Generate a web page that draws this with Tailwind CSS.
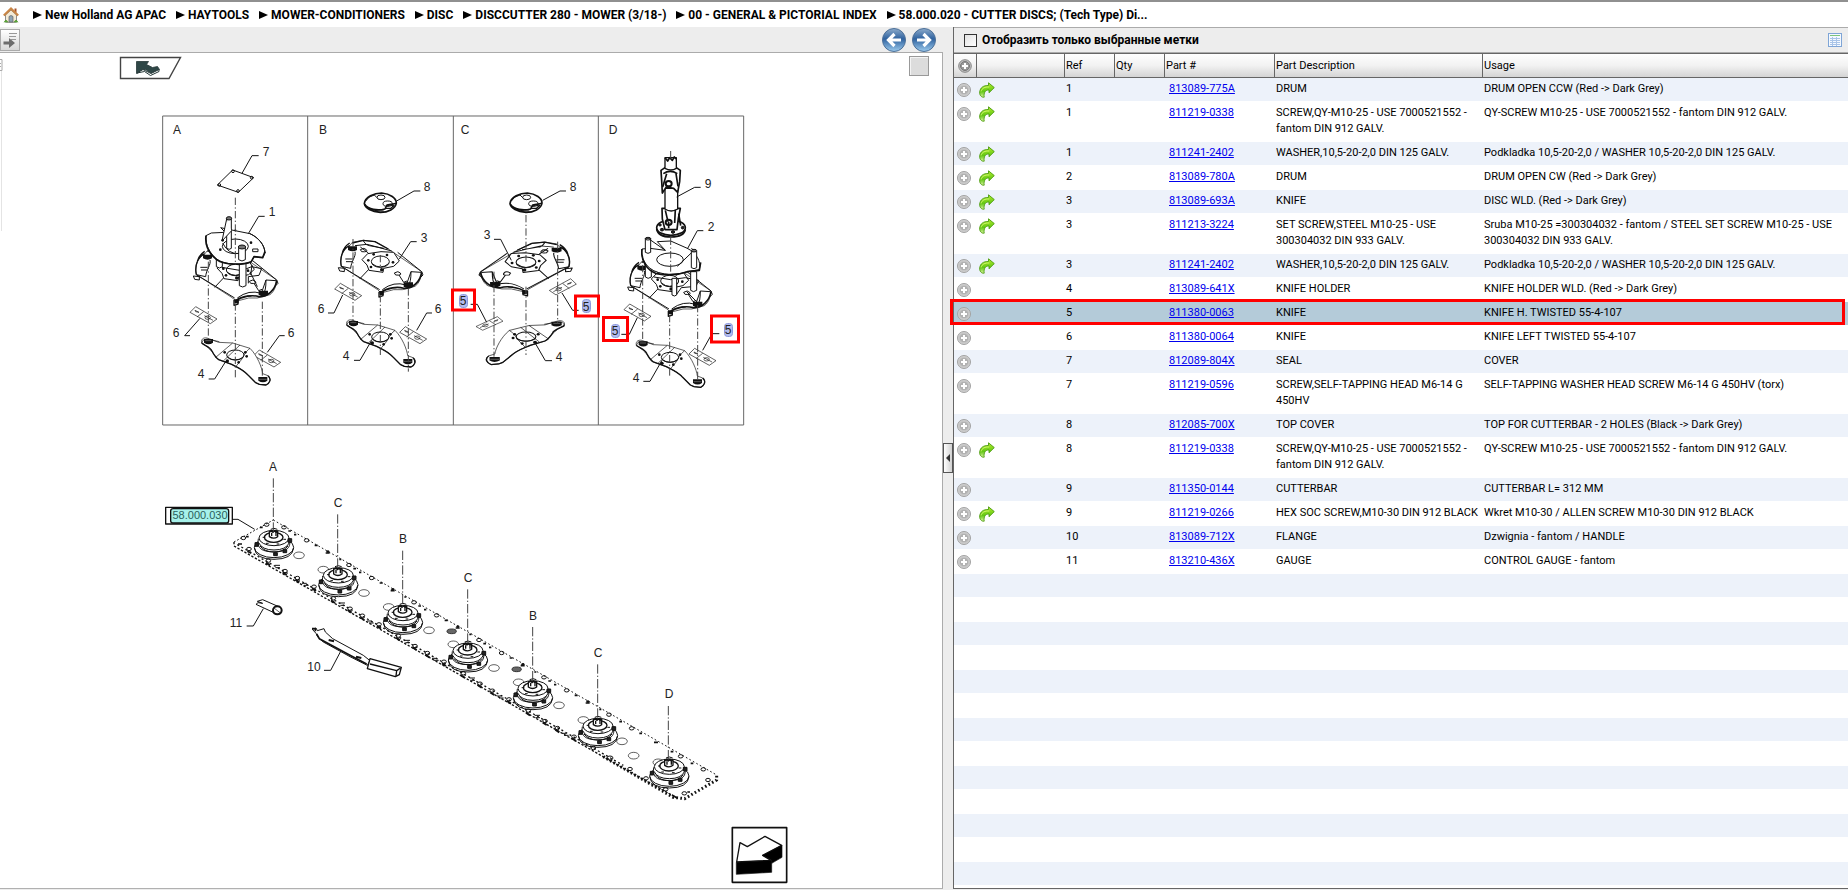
<!DOCTYPE html>
<html lang="ru">
<head>
  <meta charset="UTF-8" />
  <meta name="viewport" content="width=device-width, initial-scale=1.0"/>
  <title>58.000.020 - CUTTER DISCS</title>
  <script src="https://cdn.jsdelivr.net/npm/@tailwindcss/browser@4"></script>
</head>
<body class="flex h-screen flex-col border-t-2 border-[#909090] bg-[#ededed] pb-px font-[Roboto,Arial,sans-serif] text-[11px] leading-4 text-black">

  <!-- shared shapes -->
  <svg width="0" height="0" class="absolute" aria-hidden="true">
    <defs>
      <linearGradient id="blueBall" x1="0" y1="0" x2="0" y2="1">
        <stop offset="0" stop-color="#8dabcb"/><stop offset=".45" stop-color="#2f629f"/><stop offset="1" stop-color="#9ccbee"/>
      </linearGradient>
      <linearGradient id="greenArrow" x1="0" y1="0" x2="0" y2="1">
        <stop offset="0" stop-color="#b4ec2c"/><stop offset=".6" stop-color="#62c814"/><stop offset="1" stop-color="#d8f4a0"/>
      </linearGradient>
      <symbol id="plus" viewBox="0 0 14 14">
        <circle cx="7" cy="7" r="6.5" fill="#d0d0d0" stroke="#a2a2a2"/>
        <circle cx="7" cy="7" r="4.8" fill="#b2b2b2" stroke="#c8c8c8"/>
        <path d="M7 4v6M4 7h6" stroke="#fff" stroke-width="2"/>
      </symbol>
      <symbol id="plusDark" viewBox="0 0 14 14">
        <circle cx="7" cy="7" r="6.3" fill="#c4c4c4" stroke="#858585"/>
        <circle cx="7" cy="7" r="4.5" fill="#999" stroke="#777"/>
        <path d="M7 4v6M4 7h6" stroke="#fff" stroke-width="2"/>
      </symbol>
      <symbol id="forward" viewBox="0 0 16 16">
        <path d="M9.500 .8 15.300 5.600 10 10.800V8C6.500 7.800 4.500 10.500 5.200 15.200 2.800 15.600.3 13.500.7 10 1.200 5.500 4.500 3.300 9.500 3.500Z" fill="url(#greenArrow)" stroke="#4d9c10" stroke-width=".9"/>
        <path d="M2 9.500C3 6 6 4.800 10.300 5" fill="none" stroke="#d6f873" stroke-width=".9"/>
      </symbol>

      <!-- knife holder (4) -->
      <g id="holder">
        <path d="M-101-36C-104-50-92-54-82-50L-50-38-8-36 44-20C66 2 80 38 82 56L98 62C109 72 104 84 92 90L72 88 61 83 38 60C24 44 8 38-11 28L-50 14C-64 2-72-20-101-36Z" fill="#fff" stroke-width="2"/>
        <path d="M-101-36C-96-30-74-24-70-12-62 4-56 10-50 14L-11 28C8 38 24 44 38 60L61 83 72 88 92 90C104 84 109 72 98 62" stroke-width="4"/>
        <path d="M-60 8-8-36M-36 18 14-30M44-20C30-10 24 4 20 12L2 34M-101-36q2-12 16-12l37 8" stroke-width="2"/>
        <ellipse rx="26" ry="15"/>
        <path d="M-24 6q24 18 48 0"/>
        <g fill="#111" stroke="none">
          <circle cx="-32" cy="-8" r="4"/><circle cx="30" cy="-8" r="4"/><circle cx="-24" cy="18" r="5"/><circle cx="10" cy="22" r="4"/><circle cx="34" cy="4" r="4"/>
          <path d="M-94-48h27v11q-13 9-27 0ZM69 66h27v11q-13 9-27 0Z"/>
        </g>
        <path d="M-90-43h18M71 73h23" stroke="#aaa" stroke-width="1.500"/>
      </g>

      <!-- lower disc (3) -->
      <g id="disc">
        <path d="M-117 14C-124-18-108-42-92-48L-84-58-51-64-16-60 24-38 124 30C122 44 120 62 104 74L66 84 40 84 2 94-8 84-117 14Z" fill="#fff" stroke-width="2"/>
        <path d="M-117 14-2 84M52-28 124 30M-62 52-28 16"/>
        <path d="M-117 14C-124-18-108-42-92-48M-84-56-51-64-16-60 24-38M-92-56q-18 12-22 30" stroke-width="4"/>
        <path d="M-76-48-40-52-10-44 34-32M-60-44l24 18M-51-62q8 14 18 14l44 8" />
        <path d="M-117 14l28 6C-88 0-72-16-76-30M-105-8h22M-103 0h20M-126 18l18 2v10l-14-2z"/>
        <path d="M2 92C20 78 52 74 70 80 96 82 120 60 124 32" stroke-width="5"/>
        <path d="M6 84q34-26 72-14l14-40 30 2M92 30q0 34-8 40M124 30l4 10-8 8"/>
        <path d="M-55-6-38-24 2-30 40-28 57-2 40 14 10 20 8 32-34 26-40 10Z" fill="#fff"/>
        <ellipse rx="27" ry="17"/>
        <path d="M-25 6q25 20 50 0"/>
        <g fill="#111" stroke="none">
          <circle cx="-36" cy="-4" r="4"/><circle cx="-20" cy="-22" r="4"/><circle cx="20" cy="-20" r="4"/><circle cx="38" cy="2" r="4"/><circle cx="-28" cy="16" r="4"/><circle cx="4" cy="24" r="5"/>
          <path d="M-97-46h27v11q-13 8-27 0ZM70 62h28v13q-14 8-28 0ZM-4 88h14v12H-2z"/>
        </g>
        <path d="M-60-36q12-8 18 0t-14 6ZM42 34q12-8 18 0t-14 6ZM56 40l14 22 10-4M36 78h12"/>
        <path d="M-4 90v16l12-4v-12" stroke-width="4"/>
      </g>

      <!-- cover (8) -->
      <g id="cover">
        <path d="M-48 4C-46-16-18-28 4-28 30-26 48-12 48 2 46 20 22 30 0 30-26 28-46 18-48 4Z" fill="#fff" stroke-width="5"/>
        <path d="M-47 6C-36 22-8 26 14 20L20 8C34 4 44 6 47 2" stroke-width="5"/>
        <path d="M-44-4q8-14 26-18l8 8M-40 14q20 14 50 12"/>
        <ellipse cx="2" cy="-15" rx="12" ry="7"/>
        <ellipse cx="22" cy="4" rx="14" ry="8"/>
        <path d="M14 18h18l10-10M20 12q12-10 20 2" stroke-width="4"/>
      </g>

      <!-- flat knife -->
      <g id="knife" stroke-width="2">
        <path d="M-24-25 40 12 20 26-41-8Z" fill="#fff"/>
        <path d="M0-10-20 6M-26-14l12 6-10-2zM2 2l26 14"/>
        <ellipse cx="12" cy="8" rx="8" ry="5"/>
      </g>

      <!-- cutterbar hub -->
      <g id="hub">
        <ellipse cy="8" rx="59" ry="31" fill="#fff"/>
        <path d="M-59 10q4 34 59 34t59-34"/>
        <path d="M-47-18C-50 8-44 20 0 22 44 20 50 8 47-18" fill="#fff"/>
        <ellipse cy="-20" rx="45" ry="23" fill="#fff"/>
        <path d="M-46-6q10 22 46 22t46-22M-42 4q14 18 42 18t42-18"/>
        <ellipse cx="-1" cy="-22" rx="28" ry="15" stroke-width="4"/>
        <path d="M-14-40h25v16q-12 9-25 0Z" fill="#fff" stroke-width="4"/>
        <path d="M-12-38l5-5 4 6 5-5 4 6 4-4M-7-36v10M6-36v10" stroke-width="4"/>
        <g fill="#222">
          <path d="M-57-6h10v11h-10zM42-18h11v11H42zM-1 24h11v9H-1zM27 15h11v9H27z"/>
        </g>
        <path d="M-34-22h8M-24-4h8M8-2h8M28-16h8M-10-46q10-6 20 0"/>
      </g>

      <!-- bolts that repeat along the bar -->
      <g id="bolts">
        <ellipse cx="402" cy="262" rx="7" ry="5"/><ellipse cx="470" cy="301" rx="7" ry="5"/>
        <path d="M415 273h8M432 284h7M494 316h9M527 339h12M530 336q4-5 7 0M568 358h6" stroke-width="5"/>
        <ellipse cx="355" cy="362" rx="7" ry="5"/><ellipse cx="405" cy="393" rx="7" ry="5"/><ellipse cx="442" cy="414" rx="7" ry="5"/><ellipse cx="492" cy="440" rx="7" ry="5"/>
        <path d="M348 368l12 8M398 397l12 8M436 419l12 8M486 445l12 8" stroke-width="6"/>
        <path d="M374 376h16M376 383h14M456 430h14M462 436h14"/>
        <ellipse cx="447" cy="346" rx="16" ry="10" stroke-width="2"/>
      </g>
    </defs>
  </svg>

  <nav class="flex h-[25px] shrink-0 items-center bg-white pl-[3px] text-xs font-bold whitespace-nowrap" aria-label="Breadcrumb">
    <a href="#" class="mr-[14px]" aria-label="Home">
      <svg class="size-4" viewBox="0 0 16 16">
        <path d="M2.500 8v7.300h11V8L8 3Z" fill="#f3ead6" stroke="#8e8e8e"/>
        <path d="M6 15V9.500q2-2 4 0V15Z" fill="#8fa4b4" stroke="#666" stroke-width=".7"/>
        <path d="M11.500 1.500h2v4h-2z" fill="#a2522c"/>
        <path d="M.8 8.500 8 1.600l7.200 6.900" fill="none" stroke="#c98545" stroke-width="2.200"/>
        <path d="M1 15.300q2-4 4 0M11 15.300q2-4 4 0" fill="#5caa38" stroke="#4a8d2c" stroke-width=".6"/>
      </svg>
    </a>
    <ol id="crumbs" class="flex items-center gap-[10px]"></ol>
  </nav>

  <main class="grid min-h-0 flex-1 grid-cols-[943fr_10px_895fr]">

    <section class="flex min-w-0 flex-col border-b border-[#b0b0b0]">
      <div class="flex h-[26px] shrink-0 items-center justify-between border-b border-[#ababab] pr-[7px]">
        <button type="button" aria-label="Show tree" class="h-[22px] w-5 border border-[#aaa] bg-gradient-to-b from-white to-[#d8d8d8]">
          <svg class="h-5 w-[18px]" viewBox="0 0 18 20">
            <path d="M8 3.500h8M8 6.500h7M10 9.500h5" stroke="#999"/>
            <path d="M2.500 11.500H8V8l6 5-6 5v-3.500H2.500Z" fill="#6d6d6d"/>
          </svg>
        </button>
        <div class="flex gap-[6px]">
          <button type="button" aria-label="Previous">
            <svg class="size-6" viewBox="0 0 24 24">
              <circle cx="12" cy="12" r="11.500" fill="url(#blueBall)" stroke="#4d7098"/>
              <path d="M12.500 6 6.500 12l6 6M7.500 12H19" fill="none" stroke="#fff" stroke-width="3.200"/>
            </svg>
          </button>
          <button type="button" aria-label="Next">
            <svg class="size-6" viewBox="0 0 24 24">
              <circle cx="12" cy="12" r="11.500" fill="url(#blueBall)" stroke="#4d7098"/>
              <path d="M11.500 6l6 6-6 6M16.500 12H5" fill="none" stroke="#fff" stroke-width="3.200"/>
            </svg>
          </button>
        </div>
      </div>

      <div class="relative min-h-0 flex-1 border-r border-[#ababab] bg-white">
        <button type="button" aria-label="Fit drawing" class="absolute top-[3px] right-[13px] size-5 border border-[#999] bg-[#dcdcdc] shadow-[inset_1px_1px_0_#f4f4f4]"></button>
        <svg class="h-full w-full font-['Liberation_Sans',Arial,sans-serif]" viewBox="0 53 942 835" preserveAspectRatio="xMinYMin meet" fill="none" stroke="#111">
          <!-- edge handle and page mark -->
          <path d="M0 59.500h2V70.500H0M0 63.500h1M0 66.500h1" stroke="#aaa"/>
          <path d="M1.500 71v160" stroke="#e4e4e4"/>
          <path d="M120.500 57.500H180.500L169 78.500H120.500Z" stroke="#444" stroke-width="1.400"/>
          <path d="M136.500 61.500h12l-2 3 6 3 5-1 2 3-8 4-6-4-9 4Z" fill="#2f4747" stroke="#263838" stroke-width=".8"/>
          <path d="M137 73l6-3.500 8 4 8-4v2l-8.500 4-6-4Z" fill="#fff" stroke="#263838" stroke-width="1"/>

          <!-- disc variants A-D, drawn at three units per pixel -->
          <g transform="translate(150 105) scale(.33333)" stroke-width="3" stroke-linejoin="round">
            <path d="M38 33H1781V960H38ZM473 33V960M910 33V960M1345 33V960" stroke="#666"/>

            <!-- A -->
            <use href="#disc" x="256" y="495"/>
            <path d="M215 487l60 10 30-12 30 6-8 20-32 4v20M300 500l22 45M306 480l-4 30"/>
            <path d="M199 440v45q10 8 18 0v-45ZM268 470v72q10 8 20 0v-72Z" fill="#fff"/>
            <path d="M168 392 184 384 226 382 212 368 240 374 300 386C326 398 344 420 345 444L338 458 312 455 304 470C280 482 220 480 200 462 178 444 166 420 168 392Z" fill="#fff"/>
            <path d="M168 392C164 424 180 448 200 464 224 482 280 480 304 470L312 455 338 458 345 440" stroke-width="5"/>
            <path d="M300 386C326 398 344 420 345 444"/>
            <ellipse cx="256" cy="424" rx="39" ry="22"/>
            <path d="M218 414q16 34 50 32M308 432h16v8h-16z"/>
            <path d="M230 340v90q8 6 14 0v-90ZM266 424v40q10 8 20 0v-40Z" fill="#fff"/>
            <path d="M230 342l-14 66 28-30" fill="#fff"/>
            <ellipse cx="237" cy="340" rx="8" ry="5" fill="#777"/><ellipse cx="276" cy="426" rx="11" ry="6" fill="#777"/>
            <g fill="#111" stroke="none"><circle cx="218" cy="406" r="4"/><circle cx="211" cy="434" r="4"/><circle cx="303" cy="413" r="4"/><circle cx="256" cy="376" r="3"/></g>
            <path d="M248 195 311 218 265 262 202 240Z"/>
            <g><circle cx="249" cy="199" r="4"/><circle cx="305" cy="218" r="4"/><circle cx="264" cy="258" r="4"/><circle cx="208" cy="240" r="4"/></g>
            <use href="#knife" x="161" y="630"/>
            <use href="#knife" x="352" y="760"/>
            <use href="#holder" x="256" y="750"/>

            <!-- B -->
            <use href="#cover" x="691" y="292"/>
            <use href="#disc" x="691" y="470"/>
            <use href="#knife" x="595" y="560"/>
            <use href="#holder" x="691" y="696"/>
            <use href="#knife" x="790" y="690"/>

            <!-- C, turned the other way -->
            <use href="#cover" x="1128" y="292"/>
            <use href="#disc" transform="translate(1128 472) scale(-1.100 .95)"/>
            <use href="#knife" transform="translate(1018 655) scale(-1 .8)"/>
            <use href="#knife" transform="translate(1238 545) scale(-1 .95)"/>
            <use href="#holder" transform="translate(1128 695) scale(-1.140 .93)"/>

            <!-- D -->
            <use href="#disc" x="1559" y="528"/>
            <path d="M1512 516l50 8 44-6 40 8-8 18-44 4-14 20v-30M1610 560l30 30"/>
            <path d="M1486 470v46q8 8 18 0v-46ZM1622 500v56q8 8 18 0v-56ZM1566 520v50q8 6 14 0v-50Z" fill="#fff"/>
            <path d="M1476 432 1500 430 1546 436 1522 410 1562 408 1612 430C1640 444 1654 470 1648 494L1612 500C1570 516 1510 508 1490 480 1478 464 1472 450 1476 432Z" fill="#fff"/>
            <path d="M1476 432C1472 470 1492 496 1520 506 1560 514 1590 508 1612 500L1648 496 1652 472" stroke-width="5"/>
            <ellipse cx="1560" cy="464" rx="40" ry="20"/>
            <path d="M1582 484 1632 436 1624 430"/>
            <path d="M1486 400v42q8 6 16 0v-42ZM1624 438v50q8 6 16 0v-50Z" fill="#fff"/>
            <ellipse cx="1494" cy="401" rx="8" ry="4"/><ellipse cx="1632" cy="437" rx="8" ry="4" fill="#777"/>
            <path d="M1500 404l46 32"/>
            <ellipse cx="1563" cy="368" rx="43" ry="23" fill="#fff" stroke-width="5"/>
            <path d="M1520 372q4 24 43 24t43-22" stroke-width="5"/>
            <path d="M1536 310h55l-6 30-4 34h-36l-8-32Z" fill="#fff" stroke-width="5"/>
            <path d="M1545 250v62q18 12 38 0v-62Z" fill="#fff" stroke-width="4"/>
            <path d="M1533 196l12-8h34l12 8-2 34-6 32-12-12-22-4-12 18-2-38Z" fill="#fff" stroke-width="5"/>
            <path d="M1545 158v32q18 10 34 0v-32Z" fill="#fff" stroke-width="4"/>
            <path d="M1545 158l8 10 6-10 8 8 6-10 6 6M1540 206q20-14 42 0M1538 246l12-40M1578 206l6 38M1546 316l8 34M1576 314l-2 40M1556 350v20M1586 326l6 36" stroke-width="5"/>
            <ellipse cx="1556" cy="236" rx="9" ry="8" stroke-width="6"/><ellipse cx="1556" cy="352" rx="9" ry="8" stroke-width="6"/>
            <g fill="#222"><ellipse cx="1536" cy="374" rx="5" ry="4"/><ellipse cx="1569" cy="381" rx="5" ry="4"/><ellipse cx="1598" cy="368" rx="4" ry="4"/><ellipse cx="1530" cy="360" rx="4" ry="3"/></g>
            <use href="#knife" x="1463" y="622"/>
            <use href="#holder" x="1560" y="757"/>
            <use href="#knife" x="1658" y="755"/>

            <!-- centre lines -->
            <g stroke="#444" stroke-dasharray="22 7 4 7">
              <path d="M256 278V480M175 470V700M256 595V820M337 590V815M609 402V650M691 450V490M691 570V750M775 550V800M1128 330V470M1128 545V750M1032 500V755M1223 410V655M1562 138V165M1562 398V500M1559 630V815M1478 480V710M1643 600V825"/>
            </g>

            <!-- leaders -->
            <path d="M326 152H306L276 205M344 334H326L295 386M120 692H104L150 640M404 692H388L352 742M176 822H194L228 768M811 258H792L740 288M800 410H782L748 462M534 624H552L578 570M846 624H830L800 676M612 766H630L665 706M1248 258H1230L1178 286M1032 403H1052L1084 466M1206 767H1186L1152 708M1652 247H1634L1580 276M1660 377H1642L1612 432M1480 829H1500L1536 766M962 598H982L1010 652M1286 616H1268L1236 564M1414 688H1438L1462 638M1708 686H1686L1658 736"/>
          </g>

          <!-- cutterbar -->
          <g transform="translate(150 440) scale(.33333)" stroke-width="3" stroke-linejoin="round">
            <path d="M370 240 1700 1005" stroke-dasharray="5 7"/>
            <path d="M252 306 370 240" stroke-dasharray="5 6"/>
            <path d="M252 306V318L1440 996 1585 1076" stroke-width="4" stroke-dasharray="7 5"/>
            <path d="M262 314 1420 976" stroke-width="4" stroke-dasharray="6 8"/>
            <path d="M1360 950 1570 1072 1604 1076 1700 1020V1005" stroke-width="9" stroke-dasharray="5 7"/>
            <ellipse cx="350" cy="254" rx="7" ry="5"/><ellipse cx="280" cy="294" rx="7" ry="5"/><ellipse cx="297" cy="327" rx="7" ry="5"/>
            <path d="M330 262h8M288 290h8M264 312h12M292 334l12 6" stroke-width="5"/>
            <use href="#bolts"/>
            <use href="#bolts" x="195" y="113"/>
            <use href="#bolts" x="390" y="225"/>
            <use href="#bolts" x="585" y="338"/>
            <use href="#bolts" x="780" y="450"/>
            <g>
              <ellipse cx="1377" cy="824" rx="7" ry="5"/><ellipse cx="1445" cy="865" rx="7" ry="5"/><ellipse cx="1592" cy="949" rx="7" ry="5"/><ellipse cx="1660" cy="988" rx="7" ry="5"/>
              <ellipse cx="1330" cy="924" rx="7" ry="5"/><ellipse cx="1380" cy="954" rx="9" ry="6"/><ellipse cx="1440" cy="987" rx="7" ry="5"/><ellipse cx="1488" cy="1015" rx="7" ry="5"/><ellipse cx="1547" cy="1048" rx="7" ry="5"/>
              <ellipse cx="1603" cy="1060" rx="7" ry="5"/><ellipse cx="1674" cy="1020" rx="7" ry="5"/>
              <path d="M1408 845h8M1468 880h8M1512 907h12M1562 935h8M1622 970h8M1566 1065l14 8M1612 1056h8" stroke-width="5"/>
            </g>
            <g stroke-width="2">
              <ellipse cx="1416" cy="904" rx="16" ry="10"/><ellipse cx="1451" cy="947" rx="16" ry="10"/>
              <ellipse cx="520" cy="389" rx="16" ry="10"/><ellipse cx="716" cy="501" rx="16" ry="10"/><ellipse cx="910" cy="613" rx="16" ry="10"/><ellipse cx="1106" cy="727" rx="16" ry="10"/><ellipse cx="1300" cy="840" rx="16" ry="10"/><ellipse cx="1525" cy="967" rx="16" ry="10"/>
            </g>
            <g fill="#666" stroke="#333"><ellipse cx="905" cy="574" rx="14" ry="7"/><ellipse cx="1100" cy="688" rx="14" ry="7"/></g>
            <use href="#hub" x="372" y="314"/>
            <use href="#hub" x="565" y="426"/>
            <use href="#hub" x="759" y="539"/>
            <use href="#hub" x="954" y="652"/>
            <use href="#hub" x="1149" y="765"/>
            <use href="#hub" x="1344" y="878"/>
            <use href="#hub" x="1558" y="1000"/>
            <path d="M370 115V276M563 223V388M758 332V500M953 448V612M1148 561V726M1343 673V838M1555 798V960" stroke="#444" stroke-dasharray="28 6 4 6"/>

            <!-- gauge (11) and flange tool (10) -->
            <path d="M322 484 338 479 386 500 372 518 318 493 324 488 338 490Z" fill="#fff"/>
            <ellipse cx="382" cy="511" rx="13" ry="12" fill="#fff" stroke-width="6"/>
            <path d="M372 504l18 14" stroke-width="2"/>
            <path d="M487 568 498 564 502 572 522 566 526 576 548 596 640 646 660 662 652 676 600 650 520 606 504 592 498 580Z" fill="#fff"/>
            <path d="M500 582 508 596 600 646 650 672M486 566h10v8" stroke-width="5"/>
            <path d="M536 600l16 4M618 650l16 4" stroke-width="6"/>
            <path d="M660 656 754 682 748 704 736 710 652 686Z" fill="#fff" stroke-width="4"/>
            <path d="M660 672 740 692 752 684M740 692l-2 16" stroke-width="4"/>
            <path d="M290 558H310L340 506M522 691H542L572 634M248 238H264L314 268"/>

            <!-- section link -->
            <rect x="47" y="202" width="200" height="50" fill="#fff" stroke-width="4"/>
            <rect x="62" y="206" width="174" height="43" rx="7" fill="#a6f1ea" stroke-width="4"/>

            <!-- direction of travel -->
            <rect x="1747" y="1163" width="163" height="164" stroke-width="5"/>
            <path d="M1770 1208 1792 1220 1845 1189 1895 1216 1838 1246 1863 1261 1760 1266Z" fill="#fff" stroke-width="4"/>
            <path d="M1759 1267 1865 1261V1297L1759 1303ZM1838 1246 1896 1216V1252L1865 1270V1261Z" fill="#000" stroke-width="2"/>
          </g>

          <!-- highlighted reference labels -->
          <g fill="#b3bdf0" stroke="#8d98dd">
            <rect x="459.500" y="294.500" width="8" height="13" rx="3"/><rect x="582.500" y="299.500" width="8" height="13" rx="3"/><rect x="611.500" y="324.500" width="8" height="13" rx="3"/><rect x="724.500" y="323.500" width="8" height="13" rx="3"/>
          </g>
          <g stroke="#f00" stroke-width="3">
            <rect x="452.500" y="290" width="22" height="20"/><rect x="575.500" y="296" width="23" height="20"/><rect x="603.500" y="317.500" width="24" height="23"/><rect x="711.500" y="316" width="27" height="26"/>
          </g>

          <g class="fill-[#222] stroke-none text-xs" text-anchor="middle">
            <text x="177" y="134">A</text><text x="323" y="134">B</text><text x="465" y="134">C</text><text x="613" y="134">D</text>
            <text x="266" y="156">7</text><text x="272" y="216">1</text><text x="176" y="337">6</text><text x="291" y="337">6</text><text x="201" y="378">4</text>
            <text x="427" y="191">8</text><text x="424" y="242">3</text><text x="321" y="313">6</text><text x="438" y="313">6</text><text x="346" y="360">4</text>
            <text x="573" y="191">8</text><text x="487" y="239">3</text><text x="559" y="361">4</text>
            <text x="708" y="188">9</text><text x="711" y="231">2</text><text x="636" y="382">4</text>
            <text x="463" y="305">5</text><text x="586" y="311">5</text><text x="615" y="335">5</text><text x="728" y="334">5</text>
            <text x="273" y="471">A</text><text x="338" y="507">C</text><text x="403" y="543">B</text><text x="468" y="582">C</text><text x="533" y="620">B</text><text x="598" y="657">C</text><text x="669" y="698">D</text>
            <text x="236" y="627">11</text><text x="314" y="671">10</text>
            <text x="200" y="519" class="fill-[#2b5f5c] text-[11px]">58.000.030</text>
          </g>
        </svg>
      </div>
    </section>

    <div class="flex items-center">
      <button type="button" aria-label="Collapse panel" class="flex h-[30px] w-full items-center justify-center border border-[#555] bg-gradient-to-r from-white to-[#d0d0d0]">
        <svg class="h-2 w-1" viewBox="0 0 4 8"><path d="M4 0v8L0 4Z" fill="#333"/></svg>
      </button>
    </div>

    <section class="flex min-w-0 flex-col border-b border-l border-[#666] bg-white">
      <div class="flex h-[26px] shrink-0 items-center border-y border-[#ababab] bg-[#ededed] pr-[6px] pl-[10px]">
        <input id="only" type="checkbox" class="size-[13px] appearance-none border border-[#333] bg-gradient-to-br from-[#e2e2e2] to-white"/>
        <label for="only" class="ml-[5px] text-xs font-bold">Отобразить только выбранные метки</label>
        <button type="button" aria-label="Table settings" class="ml-auto">
          <svg class="size-[14px]" viewBox="0 0 14 14">
            <rect x=".5" y=".5" width="13" height="13" fill="#f4f9ff" stroke="#7fa5d6"/>
            <path d="M2 2.500h10" stroke="#7cc47c"/>
            <path d="M2 5.500h10M2 7.500h10M2 9.500h10M2 11.500h10M4.500 4v9M8.500 4v9" stroke="#a9c4e8"/>
          </svg>
        </button>
      </div>
      <table class="w-full table-fixed border-separate border-spacing-0 text-left">
        <colgroup>
          <col class="w-[22px]"/><col class="w-[88px]"/><col class="w-[50px]"/><col class="w-[50px]"/><col class="w-[110px]"/><col class="w-[208px]"/><col/>
        </colgroup>
        <thead>
          <tr class="h-[25px] bg-gradient-to-b from-white via-[#f2f2f2] to-[#d2d2d2] [&>th]:border-y [&>th]:border-[#666] [&>th]:p-0 [&>th]:font-normal [&>th+th]:border-l [&>th+th]:pl-px">
            <th><svg class="ml-1 size-[14px]" role="img" aria-label="Add"><use href="#plusDark"/></svg></th>
            <th></th><th>Ref</th><th>Qty</th><th>Part #</th><th>Part Description</th><th>Usage</th>
          </tr>
        </thead>
        <tbody id="parts"></tbody>
      </table>
    </section>
  </main>

  <script>
    const crumbs = [
      "New Holland AG APAC", "HAYTOOLS", "MOWER-CONDITIONERS", "DISC", "DISCCUTTER 280 - MOWER (3/18-)",
      "00 - GENERAL & PICTORIAL INDEX", "58.000.020 - CUTTER DISCS; (Tech Type) Di..."
    ];

    // has replacement, ref, part number, description, usage
    const parts = [
      [1, "1", "813089-775A", "DRUM", "DRUM OPEN CCW (Red -> Dark Grey)"],
      [1, "1", "811219-0338", "SCREW,QY-M10-25 - USE 7000521552 - fantom DIN 912 GALV.", "QY-SCREW M10-25 - USE 7000521552 - fantom DIN 912 GALV."],
      [1, "1", "811241-2402", "WASHER,10,5-20-2,0 DIN 125 GALV.", "Podkladka 10,5-20-2,0 / WASHER 10,5-20-2,0 DIN 125 GALV."],
      [1, "2", "813089-780A", "DRUM", "DRUM OPEN CW (Red -> Dark Grey)"],
      [1, "3", "813089-693A", "KNIFE", "DISC WLD. (Red -> Dark Grey)"],
      [1, "3", "811213-3224", "SET SCREW,STEEL M10-25 - USE 300304032 DIN 933 GALV.", "Sruba M10-25 =300304032 - fantom / STEEL SET SCREW M10-25 - USE 300304032 DIN 933 GALV."],
      [1, "3", "811241-2402", "WASHER,10,5-20-2,0 DIN 125 GALV.", "Podkladka 10,5-20-2,0 / WASHER 10,5-20-2,0 DIN 125 GALV."],
      [0, "4", "813089-641X", "KNIFE HOLDER", "KNIFE HOLDER WLD. (Red -> Dark Grey)"],
      [0, "5", "811380-0063", "KNIFE", "KNIFE H. TWISTED 55-4-107"],
      [0, "6", "811380-0064", "KNIFE", "KNIFE LEFT TWISTED 55-4-107"],
      [0, "7", "812089-804X", "SEAL", "COVER"],
      [0, "7", "811219-0596", "SCREW,SELF-TAPPING HEAD M6-14 G 450HV", "SELF-TAPPING WASHER HEAD SCREW M6-14 G 450HV (torx)"],
      [0, "8", "812085-700X", "TOP COVER", "TOP FOR CUTTERBAR - 2 HOLES (Black -> Dark Grey)"],
      [1, "8", "811219-0338", "SCREW,QY-M10-25 - USE 7000521552 - fantom DIN 912 GALV.", "QY-SCREW M10-25 - USE 7000521552 - fantom DIN 912 GALV."],
      [0, "9", "811350-0144", "CUTTERBAR", "CUTTERBAR L= 312 MM"],
      [1, "9", "811219-0266", "HEX SOC SCREW,M10-30 DIN 912 BLACK", "Wkret M10-30 / ALLEN SCREW M10-30 DIN 912 BLACK"],
      [0, "10", "813089-712X", "FLANGE", "Dzwignia - fantom / HANDLE"],
      [0, "11", "813210-436X", "GAUGE", "CONTROL GAUGE - fantom"]
    ];
    const selectedRef = "5";
    const emptyRows = 13;

    const esc = (s) => s.replace(/&/g, "&amp;").replace(/</g, "&lt;").replace(/>/g, "&gt;");

    document.getElementById("crumbs").innerHTML = crumbs.map((c) => `
      <li><a href="#" class="flex items-center gap-[3px]">
        <svg class="h-2 w-[9px]" viewBox="0 0 9 8"><path d="M0 0v8l9-4Z"/></svg>${esc(c)}
      </a></li>`).join("");

    const cell = "border-b border-white pt-[3px] pb-1 pl-[2px] align-top";
    let html = "";
    parts.forEach(([link, ref, num, desc, usage], i) => {
      const selected = ref === selectedRef;
      const bg = selected ? "relative bg-[#b4cbd9]" : i % 2 ? "bg-white" : "bg-[#edf2fa]";
      html += `
        <tr class="${bg}">
          <td class="border-b border-white pt-[5px] pl-[3px] align-top">
            ${selected ? '<span class="absolute -top-[3px] right-[3px] -left-1 h-[26px] border-3 border-[#f00]"></span>' : ""}
            <button type="button" class="block" aria-label="Add ${num}"><svg class="size-[14px]"><use href="#plus"/></svg></button>
          </td>
          <td class="border-b border-white pt-1 pl-[3px] align-top">${link ? '<a href="#" aria-label="Replacement"><svg class="size-4"><use href="#forward"/></svg></a>' : ""}</td>
          <td class="${cell}">${ref}</td>
          <td class="${cell}"></td>
          <td class="border-b border-white pt-[3px] pb-1 pl-[5px] align-top"><a href="#" class="text-[#0000ee] underline">${num}</a></td>
          <td class="${cell}">${esc(desc)}</td>
          <td class="${cell}">${esc(usage)}</td>
        </tr>`;
    });
    for (let i = 0; i < emptyRows; i++) {
      html += `<tr class="${i % 2 ? "bg-white" : "bg-[#edf2fa]"}"><td colspan="7" class="h-6 border-b border-white p-0"></td></tr>`;
    }
    document.getElementById("parts").innerHTML = html;
  </script>
</body>
</html>
